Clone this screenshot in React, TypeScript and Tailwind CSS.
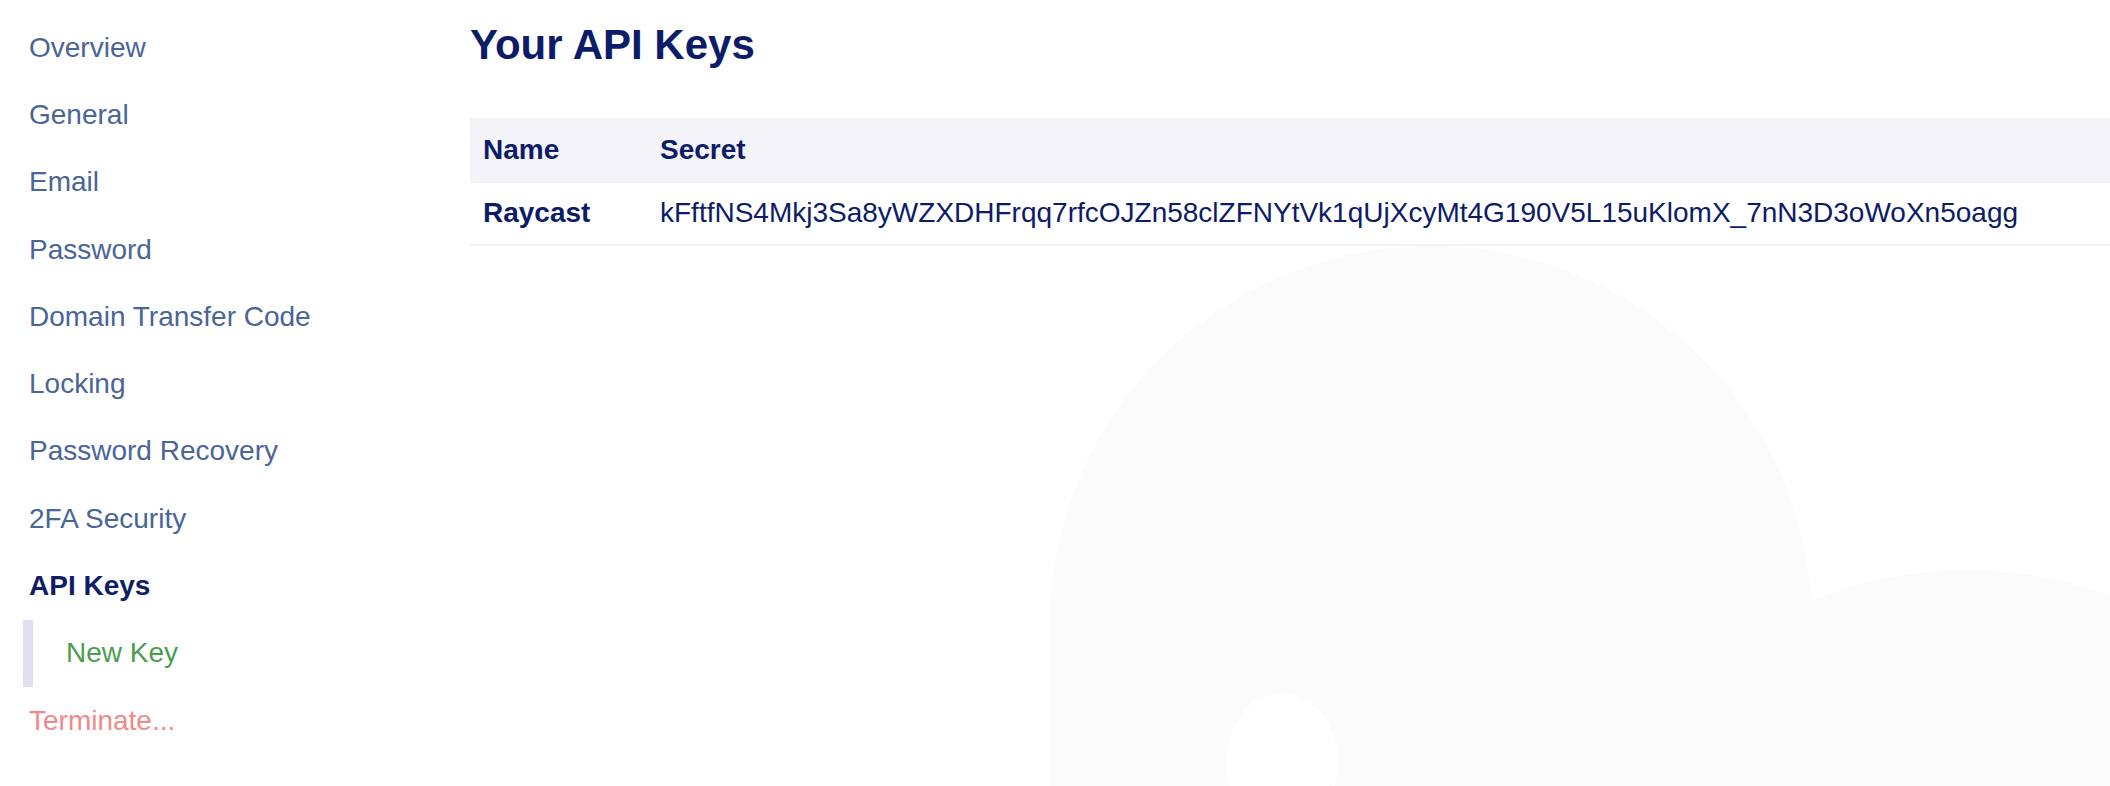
import React from "react";

type NavItem = {
  label: string;
  active?: boolean;
  sub?: boolean;
  danger?: boolean;
};

const navItems: NavItem[] = [
  { label: "Overview" },
  { label: "General" },
  { label: "Email" },
  { label: "Password" },
  { label: "Domain Transfer Code" },
  { label: "Locking" },
  { label: "Password Recovery" },
  { label: "2FA Security" },
  { label: "API Keys", active: true },
  { label: "New Key", sub: true },
  { label: "Terminate...", danger: true },
];

const keys = [
  {
    name: "Raycast",
    secret:
      "kFftfNS4Mkj3Sa8yWZXDHFrqq7rfcOJZn58clZFNYtVk1qUjXcyMt4G190V5L15uKlomX_7nN3D3oWoXn5oagg",
  },
];

function GhostBackdrop() {
  // faint mascot shapes sitting behind the content
  return (
    <svg
      className="absolute inset-0 pointer-events-none"
      width="2110"
      height="786"
      viewBox="0 0 2110 786"
    >
      <circle cx="1967" cy="982" r="412" fill="#fbfbfb" />
      <path
        d="M1050 786 L1050 623 A381 377 0 0 1 1812 623 L1812 786 Z"
        fill="#fbfbfb"
      />
      <ellipse cx="1282" cy="763" rx="56" ry="70" fill="#ffffff" />
    </svg>
  );
}

export default function App() {
  return (
    <div
      className="relative w-[2110px] h-[786px] overflow-hidden bg-white"
      style={{ fontFamily: '"Liberation Sans", Arial, sans-serif' }}
    >
      <GhostBackdrop />

      <div className="relative flex">
        {/* Sidebar */}
        <nav className="w-[470px] shrink-0 pt-[14px]">
          <ul>
            {navItems.map((item) => {
              if (item.sub) {
                return (
                  <li key={item.label} className="h-[67.3px] flex items-center ml-[23px] border-l-[10px] border-[#e0e0f0] pl-[33px] text-[28px] text-[#4a9d4f]">
                    {item.label}
                  </li>
                );
              }
              return (
                <li
                  key={item.label}
                  className={`h-[67.3px] flex items-center pl-[29px] text-[28px] ${
                    item.active
                      ? "font-bold text-[#0f1e66]"
                      : item.danger
                      ? "text-[#f08a8c]"
                      : "text-[#4a6597]"
                  }`}
                >
                  {item.label}
                </li>
              );
            })}
          </ul>
        </nav>

        {/* Main */}
        <main className="flex-1 min-w-0 pt-[21px]">
          <h1 className="text-[42px] leading-[48px] font-bold text-[#0c1c68]">
            Your API Keys
          </h1>

          <div className="mt-[49px] text-[28px] text-[#0c1c68]">
            <div className="flex h-[64.5px] items-center bg-[#f4f4f8] font-bold">
              <div className="w-[177px] shrink-0 px-[13px]">Name</div>
              <div className="flex-1 px-[13px]">Secret</div>
            </div>
            {keys.map((k) => (
              <div
                key={k.name}
                className="flex h-[63.5px] items-center border-b-2 border-[#f2f2f7]"
              >
                <div className="w-[177px] shrink-0 px-[13px] font-bold">
                  {k.name}
                </div>
                <div className="flex-1 px-[13px] whitespace-nowrap">
                  {k.secret}
                </div>
              </div>
            ))}
          </div>
        </main>
      </div>
    </div>
  );
}
